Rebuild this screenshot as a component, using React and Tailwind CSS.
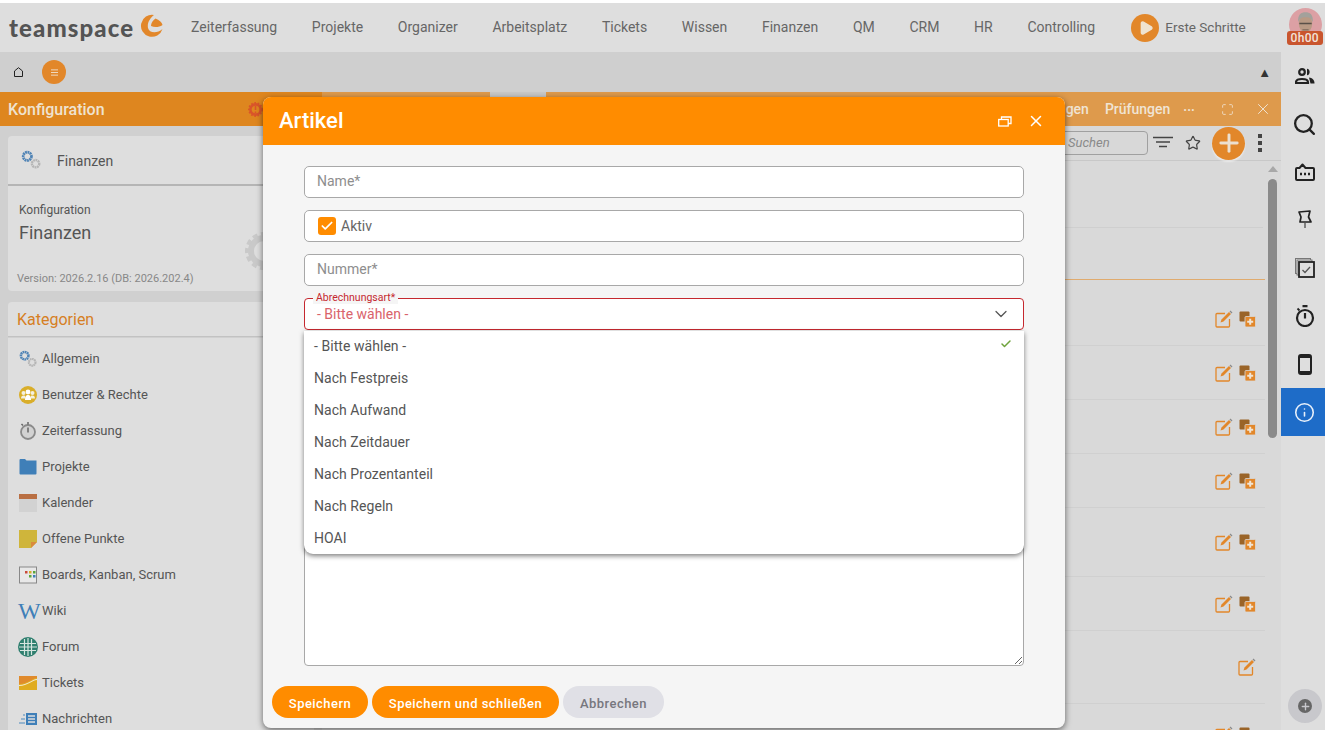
import { Search, Info, X, ChevronDown, Star, Check, Plus, Play, Maximize } from "lucide-react";

const navItems = ["Zeiterfassung", "Projekte", "Organizer", "Arbeitsplatz", "Tickets", "Wissen", "Finanzen", "QM", "CRM", "HR", "Controlling"];
const options = ["- Bitte wählen -", "Nach Festpreis", "Nach Aufwand", "Nach Zeitdauer", "Nach Prozentanteil", "Nach Regeln", "HOAI"];

function Gears({ className }) {
  return (
    <svg viewBox="0 0 24 24" className={className} fill="none">
      <circle cx="8" cy="8" r="4.5" stroke="#4f83b5" strokeWidth="3" strokeDasharray="2 0.6" />
      <circle cx="17" cy="16" r="4" stroke="#b5b5b5" strokeWidth="2.6" strokeDasharray="2 0.6" />
    </svg>
  );
}

const categories = [
  ["Allgemein", <Gears className="w-[20px] h-[20px]" />],
  ["Benutzer & Rechte", (
    <svg viewBox="0 0 20 20" className="w-[20px] h-[20px]">
      <circle cx="10" cy="10" r="9" fill="#d9ae2a" />
      <circle cx="5.500" cy="8" r="2" fill="#f4f0e0" /><circle cx="14.500" cy="8" r="2" fill="#f4f0e0" /><circle cx="10" cy="7" r="2.400" fill="#fff" />
      <path d="M3 13.500c0-2 1-3 2.500-3s2 .5 2 3zM12.500 13.500c0-2.500.5-3 2-3s2.500 1 2.500 3z" fill="#f4f0e0" />
      <path d="M7 15c0-4 1.500-5 3-5s3 1 3 5z" fill="#fff" />
    </svg>
  )],
  ["Zeiterfassung", (
    <svg viewBox="0 0 20 20" className="w-[20px] h-[20px]" fill="none" stroke="#8a8a8a">
      <circle cx="10" cy="11" r="7" strokeWidth="1.800" fill="#d2d2d2" />
      <path d="M10 6.500v5M10 1v2.500M3.500 3l1.500 1.500" strokeWidth="1.500" stroke="#666" />
    </svg>
  )],
  ["Projekte", (
    <svg viewBox="0 0 20 20" className="w-[20px] h-[20px]">
      <path d="M1.500 3q0-1 1-1h4.500l1.500 1.500h10v13q0 1-1 1h-15q-1 0-1-1z" fill="#3f7fb8" />
    </svg>
  )],
  ["Kalender", (
    <svg viewBox="0 0 20 20" className="w-[20px] h-[20px]">
      <rect x="1" y="1" width="18" height="18" fill="#d2d2d2" />
      <rect x="1" y="1" width="18" height="5" fill="#b96f43" />
    </svg>
  )],
  ["Offene Punkte", (
    <svg viewBox="0 0 20 20" className="w-[20px] h-[20px]">
      <path d="M1 1h18v12l-6 6H1z" fill="#cfb53b" />
      <path d="M13 19v-6h6z" fill="#d98a3d" />
    </svg>
  )],
  ["Boards, Kanban, Scrum", (
    <svg viewBox="0 0 20 20" className="w-[20px] h-[20px]">
      <rect x="1.500" y="2" width="17" height="16" fill="#e8e8e8" stroke="#888" />
      <rect x="7" y="6" width="2.500" height="2.500" fill="#c94a3a" /><rect x="11" y="6" width="2.500" height="2.500" fill="#d9ae2a" /><rect x="15" y="6" width="2.500" height="2.500" fill="#5aa63c" />
      <rect x="11" y="10" width="2.500" height="2.500" fill="#5aa63c" /><rect x="15" y="10" width="2.500" height="2.500" fill="#3f7fb8" />
    </svg>
  )],
  ["Wiki", <span className="w-[20px] text-center text-[#3f7fb8] text-[24px] leading-none font-['Liberation_Serif',serif]">W</span>],
  ["Forum", (
    <svg viewBox="0 0 20 20" className="w-[20px] h-[20px]" stroke="#d8e6e0" strokeWidth="1.200">
      <circle cx="10" cy="10" r="10" fill="#2f7f6f" stroke="none" />
      <path d="M6.500 2v16M10 1v18M13.500 2v16M2 6.500h16M1 10h18M2 13.500h16" />
    </svg>
  )],
  ["Tickets", (
    <svg viewBox="0 0 20 20" className="w-[20px] h-[20px]">
      <rect x="1" y="3" width="18" height="14" fill="#e0ac1f" />
      <path d="M1 3h18v2c-5 0-9 6-18 6z" fill="#e08a2c" />
      <path d="M1 12c9 0 13-6 18-6v1c-5 0-9 6-18 6z" fill="#f3ead0" />
    </svg>
  )],
  ["Nachrichten", (
    <svg viewBox="0 0 20 20" className="w-[20px] h-[20px]">
      <rect x="8" y="4" width="11" height="12" fill="#3f7fb8" />
      <path d="M10 7h7M10 10h7M10 13h7" stroke="#ddd" strokeWidth="1.300" />
      <path d="M5 6h2M3 10h4M1 14h6" stroke="#7ea6c9" strokeWidth="1.500" />
    </svg>
  )],
];

function EditIcon({ className }) {
  return (
    <svg viewBox="0 0 18 18" className={className} fill="none">
      <path d="M10 3.500H2a1 1 0 0 0-1 1V16a1 1 0 0 0 1 1h11.500a1 1 0 0 0 1-1V9" stroke="#e2872a" strokeWidth="1.300" />
      <path d="M5.500 12.500l1-3L14 2l2 2-7.500 7.500z" fill="#e2872a" />
      <path d="M15 1l2 2" stroke="#8a8a8a" strokeWidth="1.300" />
    </svg>
  );
}

function CopyIcon({ className }) {
  return (
    <svg viewBox="0 0 17 16" className={className}>
      <rect x="0.500" y="0.500" width="10" height="10" rx="1" fill="#9a6428" />
      <rect x="6" y="5.500" width="10.500" height="10.500" rx="1" fill="#e2872a" stroke="#d8d8d8" strokeWidth="0.800" />
      <path d="M11.200 7.800v6M8.200 10.800h6" stroke="#f0e4d4" strokeWidth="2" />
    </svg>
  );
}

function Field({ children, className = "" }) {
  return <div className={`h-[32px] bg-white border border-[#a8a8a8] rounded-[5px] flex items-center ${className}`}>{children}</div>;
}

const rows = [
  "h-[66px] pt-[12px]", "h-[54px]", "h-[54px]", "h-[54px]", "h-[69px]", "h-[54px]", "h-[73px]", "h-[54px] pt-[8px]",
];

function SideButton({ children, active }) {
  return <div className={`h-[48px] pl-[3px] flex items-center justify-center ${active ? "bg-[#1e6cc8] text-[#e8f0fa]" : "text-[#222]"}`}>{children}</div>;
}

export default function App() {
  return (
    <div className="relative w-[1325px] h-[730px] overflow-hidden bg-white pt-[3px] font-['Roboto',sans-serif] text-[#555]">
      {/* hauptmenue */}
      <header className="h-[49px] bg-[#dedede] flex items-center">
        <div className="w-[191px] pl-[9px] flex items-center">
          <span className="font-['Lato',sans-serif] font-black text-[24px] leading-none text-[#545454] tracking-[1.1px]">teamspace</span>
          <svg viewBox="0 0 24 24" className="w-[24px] h-[24px] ml-[5px] -mt-[4px]">
            <path d="M15 1A11 11 0 1 0 23.500 15C18 20 10 19 9 14 8 9 11 4 15 1Z" fill="#e2872a" />
            <path d="M16.500 4.500C20 6 23 8 23.500 11 20 13.500 15 13.500 12 12 12 9 14 6 16.500 4.500Z" fill="#e2872a" />
          </svg>
        </div>
        <nav className="flex items-center gap-[34.700px] text-[14px] text-[#666]">
          {navItems.map((n) => <span key={n}>{n}</span>)}
        </nav>
        <div className="ml-[36px] flex items-center gap-[6px] text-[13.500px] text-[#666]">
          <div className="w-[28px] h-[28px] rounded-full bg-[#e2872a] flex items-center justify-center">
            <Play className="w-[16px] h-[16px] ml-[2px] text-[#efe3d0] fill-[#efe3d0]" />
          </div>
          <span>Erste Schritte</span>
        </div>
        <div className="relative ml-[43px] w-[33px] h-[33px] -mt-[6px]">
          <svg viewBox="0 0 32 32" className="w-[33px] h-[33px] rounded-full">
            <rect width="32" height="32" fill="#dca0a4" />
            <path d="M5 32c0-6 5-8 11-8s11 2 11 8z" fill="#b8443a" />
            <ellipse cx="16" cy="15" rx="6.500" ry="9" fill="#b99a84" />
            <path d="M9 14c-1-8 3-10 7-10s8 2 7 10c-1-3-2-5-7-5s-6 2-7 5z" fill="#a3a19b" />
            <path d="M10 15h12" stroke="#5a5048" strokeWidth="1.400" />
            <path d="M13 21h6" stroke="#8c7464" strokeWidth="1.500" />
          </svg>
          <span className="absolute left-[-2px] top-[23px] w-[36px] h-[14px] rounded-[3px] bg-[#c9552e] text-[#f3e3da] text-[12px] leading-[14px] font-medium text-center tracking-[0.3px]">0h00</span>
        </div>
      </header>

      <div className="flex h-[678px]">
        <div className="w-[1281px] flex flex-col">
          {/* toolbar */}
          <div className="h-[40px] bg-[#cfcfcf] flex items-center pl-[14px] pr-[10px]">
            <svg viewBox="0 0 9 10" className="w-[9px] h-[10px]" fill="none" stroke="#222" strokeWidth="1">
              <path d="M.500 9.500V4L4.500.700 8.500 4v5.500z" />
            </svg>
            <div className="ml-[19px] w-[24px] h-[24px] rounded-full bg-[#e2872a] flex items-center justify-center">
              <svg viewBox="0 0 8 7" className="w-[7px] h-[7px]" stroke="#f0e4d4" strokeWidth="1"><path d="M0 .5h8M0 3.500h8M0 6.500h8" /></svg>
            </div>
            <span className="ml-auto text-[13px] leading-none text-[#333]">▲</span>
          </div>

          <div className="flex-1 flex min-h-0">
            {/* linke spalte */}
            <aside className="w-[322px] bg-[#d0d0d0] flex flex-col">
              <div className="h-[34px] bg-[#de861f] flex items-center justify-between pl-[8px] pr-[59px] pt-[2px] text-[16px] font-medium text-[#efe3d0]">
                <span>Konfiguration</span>
                <svg viewBox="0 0 14 14" className="w-[15px] h-[15px] -mt-[2px]">
                  <circle cx="7" cy="7" r="4.800" fill="none" stroke="#d9552a" strokeWidth="2.400" />
                  <circle cx="7" cy="7" r="6.200" fill="none" stroke="#d9552a" strokeWidth="1.500" strokeDasharray="1.600 1.500" />
                  <path d="M7 3.800v3.700M7 8.800v1.400" stroke="#d9552a" strokeWidth="1.500" />
                </svg>
              </div>
              <div className="mx-[8px] mt-[10px] h-[155px] rounded-[4px] bg-[#dedede] flex flex-col">
                <div className="h-[50px] border-b-2 border-[#b5b5b5] flex items-center pl-[12px] gap-[15px] text-[14px]">
                  <Gears className="w-[22px] h-[22px]" />
                  <span className="pt-[2px]">Finanzen</span>
                </div>
                <div className="relative flex-1 pl-[11px] pt-[15px]">
                  <p className="text-[12px] leading-[18px]">Konfiguration</p>
                  <p className="text-[18px] leading-[27px]">Finanzen</p>
                  <p className="absolute left-[9px] bottom-[6px] text-[11px] leading-[13px] text-[#888]">Version: 2026.2.16 (DB: 2026.202.4)</p>
                  <svg viewBox="0 0 40 40" className="absolute left-[236px] top-[45px] w-[40px] h-[40px]" fill="none" stroke="#c9c9c9">
                    <circle cx="20" cy="20" r="13" strokeWidth="6" />
                    <circle cx="20" cy="20" r="17" strokeWidth="4" strokeDasharray="5 3.500" />
                  </svg>
                </div>
              </div>
              <div className="mx-[8px] mt-[11px] h-[35px] rounded-t-[4px] bg-[#dedede] border-b border-[#c2c2c2] flex items-center pl-[9px] pt-[2px] text-[16px] text-[#d67f24]">Kategorien</div>
              <ul className="mx-[8px] mt-px flex-1 bg-[#dedede] pl-[10px] pt-[3px] text-[13px] overflow-hidden">
                {categories.map(([label, icon]) => (
                  <li key={label} className="h-[36px] flex items-center gap-[4px]">
                    <span className="w-[20px] flex justify-center">{icon}</span>
                    <span>{label}</span>
                  </li>
                ))}
              </ul>
            </aside>

            {/* rechte spalte */}
            <section className="relative flex-1 bg-[#d9d9d9] flex flex-col min-w-0">
              <span className="absolute left-[168px] top-0 w-[56px] h-[5px] bg-[#c8c8c8]" />
              <div className="h-[34px] bg-[#de9a4c] flex items-center justify-end pr-[9px] text-[14px] font-medium text-[#f0e4d4]">
                <span>Abrechnungen</span>
                <span className="ml-[16px]">Prüfungen</span>
                <span className="ml-[13px] -mt-[6px]">...</span>
                <Maximize className="ml-[26px] w-[13px] h-[13px]" strokeWidth={1.500} />
                <X className="ml-[20px] w-[18px] h-[18px]" strokeWidth={1.300} />
              </div>
              <div className="h-[35px] border-b border-[#c8c8c8] flex items-center justify-end pr-[19px] bg-[#d8d8d8]">
                <div className="w-[120px] h-[24px] border border-[#a0a0a0] rounded-[4px] flex items-center pl-[39px] text-[13px] italic text-[#8a8a8a]">Suchen</div>
                <svg viewBox="0 0 20 14" className="ml-[5px] w-[20px] h-[14px]" stroke="#444" strokeWidth="1.500">
                  <path d="M0 1.500h20M3 6h14M6 10.500h8" />
                </svg>
                <Star className="ml-[12px] w-[16px] h-[16px] text-[#444]" strokeWidth={1.800} />
                <div className="ml-[11px] w-[33px] h-[33px] rounded-full bg-[#e2872a] flex items-center justify-center shadow-[0_2px_2px_rgba(255,255,255,0.5)]">
                  <Plus className="w-[28px] h-[28px] text-[#ece0d0]" strokeWidth={2.500} />
                </div>
                <div className="ml-[13px] flex flex-col gap-[3px]">
                  <span className="w-[4px] h-[4px] bg-[#444]" /><span className="w-[4px] h-[4px] bg-[#444]" /><span className="w-[4px] h-[4px] bg-[#444]" />
                </div>
              </div>

              <div className="flex-1 flex min-h-0">
                <div className="flex-1 min-w-0">
                  <div className="h-[67px] border-b border-[#cfcfcf] mr-[2px]" />
                  <div className="h-[52px] border-b border-[#e0ab6e]" />
                  {rows.map((cls, i) => (
                    <div key={i} className={`${cls} border-b border-[#d0d0d0] flex items-center justify-end pr-[9px] gap-[6px]`}>
                      <EditIcon className="w-[18px] h-[18px]" />
                      {i !== 6 && <CopyIcon className="w-[17px] h-[16px]" />}
                    </div>
                  ))}
                </div>
                <div className="w-[16px] flex flex-col items-center pt-[5px] pr-px">
                  <span className="w-0 h-0 border-x-[5px] border-x-transparent border-b-[6px] border-b-[#a8a8a8]" />
                  <span className="mt-[7px] w-[9px] h-[259px] rounded-[5px] bg-[#8a8a8a]" />
                </div>
              </div>
            </section>
          </div>
        </div>

        {/* seitenleiste */}
        <aside className="flex-1 bg-[#dedede] flex flex-col">
          <SideButton>
            <svg viewBox="0 0 20 16" className="w-[20px] h-[16px]" fill="none" stroke="#222" strokeWidth="2.200">
              <circle cx="7" cy="4" r="2.800" />
              <path d="M1 15v-.800c0-2.500 3-3.200 6-3.200s6 .700 6 3.200v.800z" />
              <path d="M12 .800c3.500 0 3.500 6.400 0 6.400z" fill="#222" stroke="none" />
              <path d="M14 9.500c3 .500 5.500 2 5.500 6h-4z" fill="#222" stroke="none" />
            </svg>
          </SideButton>
          <SideButton><Search className="w-[25px] h-[25px]" strokeWidth={2.200} /></SideButton>
          <SideButton>
            <svg viewBox="0 0 20 18" className="w-[20px] h-[18px]" fill="none" stroke="#222" strokeWidth="2">
              <path d="M1 6q0-1 1-1h2.500L7.500 1.500 10.500 5H18q1 0 1 1v10q0 1-1 1H2q-1 0-1-1z" strokeLinejoin="round" />
              <path d="M5 11h2M9 11h2M13 11h2" strokeWidth="2.400" />
            </svg>
          </SideButton>
          <SideButton>
            <svg viewBox="0 0 16 20" className="w-[16px] h-[20px]" fill="none" stroke="#222" strokeWidth="1.700">
              <path d="M2 2l11-1-1.500 6 2.500 5H3l1-5z" strokeLinejoin="round" />
              <path d="M8 13v5" strokeWidth="1" />
            </svg>
          </SideButton>
          <SideButton>
            <svg viewBox="0 0 20 20" className="w-[20px] h-[20px]" fill="none">
              <rect x="0.500" y="0.500" width="15" height="15" stroke="#777" />
              <rect x="2" y="2" width="15" height="15" stroke="#777" fill="#dedede" />
              <rect x="4" y="4" width="15" height="15" stroke="#222" strokeWidth="1.800" fill="#dedede" />
              <path d="M7.500 12l2.500 2.500 5-5.500" stroke="#555" strokeWidth="1.300" />
            </svg>
          </SideButton>
          <SideButton>
            <svg viewBox="0 0 20 22" className="w-[20px] h-[22px]" fill="none" stroke="#222" strokeWidth="2.200">
              <circle cx="10" cy="13" r="8" />
              <path d="M10 8v5.500M7.500 1.200h5" />
              <path d="M2.500 3.500l2 2" strokeWidth="1.800" />
            </svg>
          </SideButton>
          <SideButton>
            <svg viewBox="0 0 14 21" className="w-[14px] h-[21px]" fill="none" stroke="#222">
              <rect x="1" y="1" width="12" height="19" rx="2" strokeWidth="2" />
              <path d="M1 3h12M1 18h12" strokeWidth="2" />
            </svg>
          </SideButton>
          <SideButton active><Info className="w-[21px] h-[21px]" strokeWidth={1.800} /></SideButton>
          <div className="mt-auto mb-[7px] ml-[7px] w-[34px] h-[34px] rounded-full bg-[#c8c8cc] flex items-center justify-center">
            <div className="w-[14px] h-[14px] rounded-full bg-[#666] flex items-center justify-center">
              <Plus className="w-[11px] h-[11px] text-[#c8c8cc]" strokeWidth={3} />
            </div>
          </div>
        </aside>
      </div>

      {/* dialog */}
      <div className="absolute left-[263px] top-[97px] w-[802px] h-[631px] rounded-[8px] bg-[#f5f5f5] shadow-[0_2px_6px_rgba(0,0,0,0.55)] flex flex-col overflow-hidden">
        <div className="h-[48px] bg-[#ff8c00] flex items-center pl-[16px] pr-[20px] text-white">
          <span className="text-[22px] font-medium pb-[2px]">Artikel</span>
          <svg viewBox="0 0 14 11" className="ml-auto w-[14px] h-[11px]" fill="none" stroke="#fff" strokeWidth="1.300">
            <rect x="0.700" y="3.500" width="9.500" height="6.500" />
            <path d="M3.500 3.500V1h9.500v6.500h-2.800" />
          </svg>
          <X className="ml-[15px] w-[18px] h-[18px]" strokeWidth={2} />
        </div>

        <div className="relative mx-[41px] mt-[21px] flex-1 flex flex-col gap-[12px] text-[14px]">
          <Field className="pl-[12px] pb-[2px] text-[#8e8e8e]">Name*</Field>
          <Field className="pl-[13px] text-[#666]">
            <span className="w-[18px] h-[18px] rounded-[3px] bg-[#ff8c00] flex items-center justify-center mr-[5px]">
              <Check className="w-[14px] h-[14px] text-white" strokeWidth={3} />
            </span>
            Aktiv
          </Field>
          <Field className="pl-[12px] pb-[2px] text-[#8e8e8e]">Nummer*</Field>
          <div className="relative h-[32px] bg-white border border-[#c5282f] rounded-[4px] flex items-center pl-[12px] text-[#d9636b]">
            <span className="absolute left-[8px] -top-[7px] bg-[#f5f5f5] px-[3px] text-[10.500px] leading-[12px] text-[#c5282f]">Abrechnungsart*</span>
            - Bitte wählen -
            <ChevronDown className="absolute right-[12px] top-[5px] w-[20px] h-[20px] text-[#555]" strokeWidth={1.500} />
          </div>
          <textarea className="h-[324px] bg-white border border-[#a8a8a8] rounded-[4px]" />

          {/* dropdown */}
          <ul className="absolute left-0 top-[165px] w-[720px] h-[223px] bg-white rounded-b-[9px] shadow-[0_2px_5px_rgba(0,0,0,0.5)] pl-[10px] pr-[12px] text-[#555] tracking-[0.05px]">
            {options.map((o, i) => (
              <li key={o} className="h-[32px] pb-[2px] flex items-center justify-between">
                <span>{o}</span>
                {i === 0 && <Check className="-mt-[4px] w-[12px] h-[12px] text-[#6fa33c]" strokeWidth={3} />}
              </li>
            ))}
          </ul>
        </div>

        <div className="flex items-center gap-[4px] pl-[9px] pb-[10px] text-[13px] font-medium tracking-[0.45px]">
          <button className="h-[32px] w-[96px] pt-[4px] rounded-full bg-[#ff8c00] text-white">Speichern</button>
          <button className="h-[32px] w-[187px] pt-[4px] rounded-full bg-[#ff8c00] text-white">Speichern und schließen</button>
          <button className="h-[32px] w-[101px] pt-[4px] rounded-full bg-[#e0e0e6] text-[#77777e]">Abbrechen</button>
        </div>
      </div>
    </div>
  );
}
